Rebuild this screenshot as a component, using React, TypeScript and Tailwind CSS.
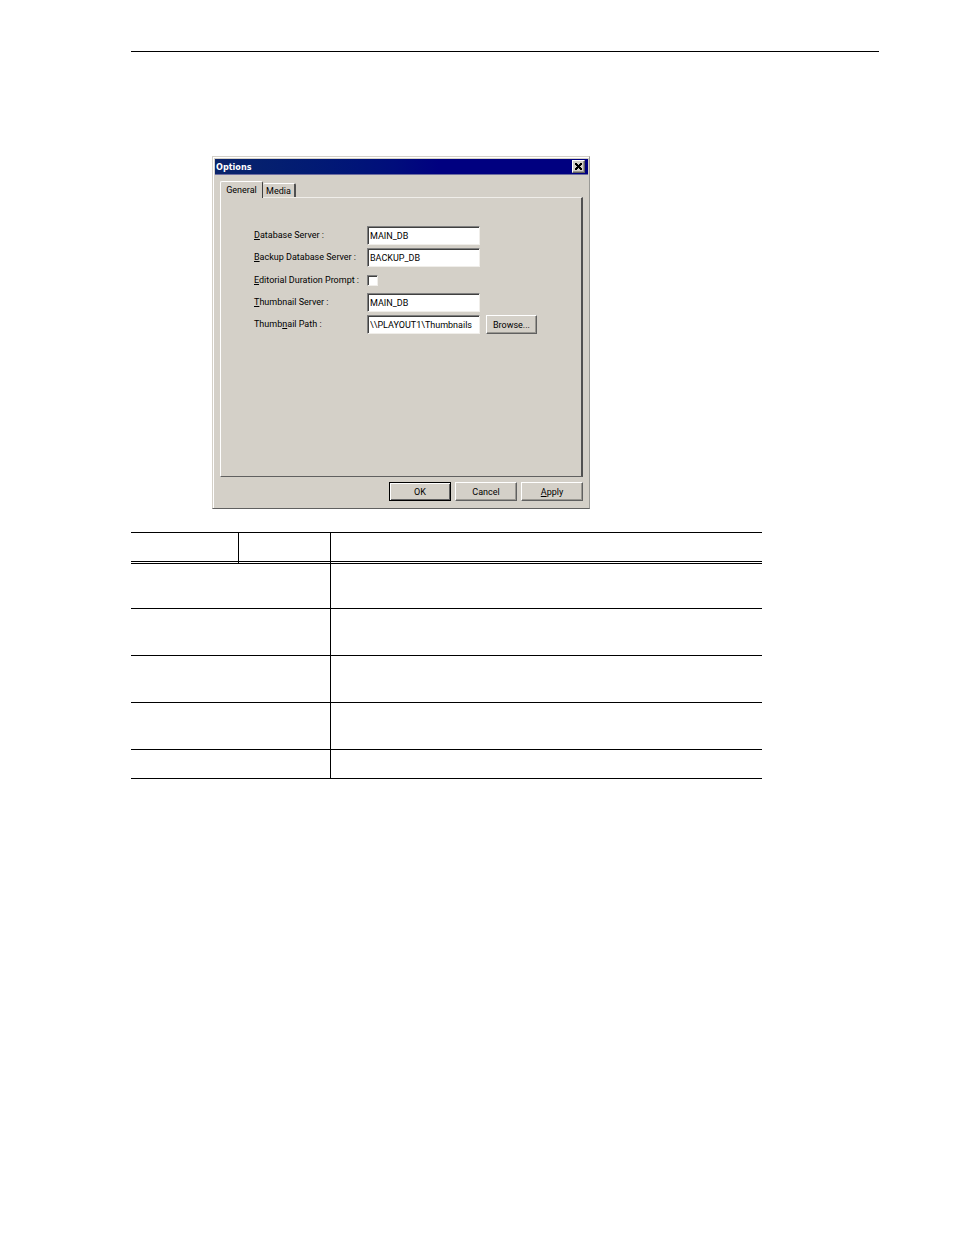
import type { ReactNode } from 'react';

const raised =
  'border border-t-white border-l-white border-r-[#606060] border-b-[#606060] shadow-[inset_-1px_-1px_0_#9a9892] bg-[#d4d0c8]';
const sunken =
  'border border-t-[#808080] border-l-[#808080] border-r-[#f0eeea] border-b-[#f0eeea] shadow-[inset_1px_1px_0_#404040] bg-white';

function TextRow({ id, label, value, children }: { id: string; label: ReactNode; value: string; children?: ReactNode }) {
  return (
    <div className="flex h-[19px] items-stretch">
      <label htmlFor={id} className="w-[113px] shrink-0 leading-[18px] whitespace-nowrap">
        {label}
      </label>
      <input id={id} type="text" defaultValue={value} className={`w-[113px] pl-[2px] leading-[16px] outline-none ${sunken}`} />
      {children}
    </div>
  );
}

function OptionsDialog() {
  return (
    <section
      role="dialog"
      aria-labelledby="options-title"
      className="w-[378px] border border-t-[#d4d0c8] border-l-[#d4d0c8] border-r-[#9a9a96] border-b-[#606060] bg-[#d4d0c8] font-[Roboto,'Liberation_Sans',sans-serif] text-[9px] text-black"
    >
      <div className="border-t border-l border-white pt-px pl-px pr-px">
        <header className="flex h-4 items-center justify-between border-b border-[#6c6ca0] bg-linear-to-r from-[#0a246a] to-[#000080] to-60% pl-px pr-[3px]">
          <h1 id="options-title" className="pt-[2px] font-['DejaVu_Sans_Condensed','DejaVu_Sans',sans-serif] text-[9px] font-bold text-white">
            Options
          </h1>
          <button type="button" aria-label="Close" className={`flex h-[13px] w-[13px] items-center justify-center ${raised}`}>
            <svg width="7" height="7" viewBox="0 0 7 7" shapeRendering="crispEdges" aria-hidden="true">
              <path
                d="M0 0h2v1h-2z M5 0h2v1h-2z M0 1h3v1h-3z M4 1h3v1h-3z M1 2h5v1h-5z M2 3h3v1h-3z M1 4h5v1h-5z M0 5h3v1h-3z M4 5h3v1h-3z M0 6h2v1h-2z M5 6h2v1h-2z"
                fill="#000"
              />
            </svg>
          </button>
        </header>

        <div className="pt-[6px] pr-[5px] pb-[7px] pl-[5px]">
          <div role="tablist" className="flex items-end">
            <button
              type="button"
              role="tab"
              aria-selected="true"
              className="-mb-px h-[17px] w-[43px] rounded-t-[2px] border-t border-l border-r border-t-white border-l-white border-r-[#404040] bg-[#d4d0c8] leading-[14px]"
            >
              General
            </button>
            <button
              type="button"
              role="tab"
              aria-selected="false"
              className="h-[14px] w-[33px] rounded-t-[2px] border-t border-r-2 border-t-white border-r-[#505050] leading-[14px]"
            >
              Media
            </button>
          </div>

          <div
            role="tabpanel"
            className="flex h-[280px] flex-col gap-[3px] border-t border-r-2 border-b border-l border-t-[#f0eeea] border-r-[#505050] border-b-[#606060] border-l-white pt-[28px] pl-[33px]"
          >
            <TextRow id="database-server" label={<><u>D</u>atabase Server :</>} value="MAIN_DB" />
            <TextRow id="backup-server" label={<><u>B</u>ackup Database Server :</>} value="BACKUP_DB" />
            <div className="flex h-5 items-center">
              <label htmlFor="duration-prompt" className="w-[113px] shrink-0 leading-[18px] whitespace-nowrap">
                <u>E</u>ditorial Duration Prompt :
              </label>
              <input id="duration-prompt" type="checkbox" className={`h-[11px] w-[11px] appearance-none ${sunken}`} />
            </div>
            <TextRow id="thumbnail-server" label={<><u>T</u>humbnail Server :</>} value="MAIN_DB" />
            <TextRow id="thumbnail-path" label={<>Thumb<u>n</u>ail Path :</>} value="\\PLAYOUT1\Thumbnails">
              <button type="button" className={`ml-[6px] w-[51px] leading-[16px] ${raised}`}>
                Browse...
              </button>
            </TextRow>
          </div>

          <footer className="mt-[5px] flex justify-end gap-1">
            <button type="button" className="h-[19px] w-[62px] border border-black bg-[#d4d0c8] leading-[16px] shadow-[inset_1px_1px_0_#fff,inset_-1px_-1px_0_#606060]">
              OK
            </button>
            <button type="button" className={`h-[19px] w-[62px] leading-[16px] ${raised}`}>
              Cancel
            </button>
            <button type="button" className={`h-[19px] w-[62px] leading-[16px] ${raised}`}>
              <u>A</u>pply
            </button>
          </footer>
        </div>
      </div>
    </section>
  );
}

const rowHeights = ['h-[45px]', 'h-[47px]', 'h-[47px]', 'h-[47px]', 'h-[29px]'];

export default function App() {
  return (
    <main className="min-h-screen bg-white pt-[51px] pr-[75px] pb-10 pl-[131px]">
      <hr className="border-t border-black" />
      <div className="mt-[104px] ml-[81px]">
        <OptionsDialog />
      </div>
      <table className="mt-[23px] w-full max-w-[631px] table-fixed border-separate border-spacing-0">
        <colgroup>
          <col className="w-[108px]" />
          <col className="w-[91px]" />
          <col />
        </colgroup>
        <thead>
          <tr className="h-8">
            <th className="border-t border-r border-b-3 border-black [border-bottom-style:double]" />
            <th className="border-t border-b-3 border-black [border-bottom-style:double]" />
            <th className="border-t border-b-3 border-l border-black [border-bottom-style:double]" />
          </tr>
        </thead>
        <tbody>
          {rowHeights.map((height, i) => (
            <tr key={i} className={height}>
              <td colSpan={2} className="border-b border-black" />
              <td className="border-b border-l border-black" />
            </tr>
          ))}
        </tbody>
      </table>
    </main>
  );
}
